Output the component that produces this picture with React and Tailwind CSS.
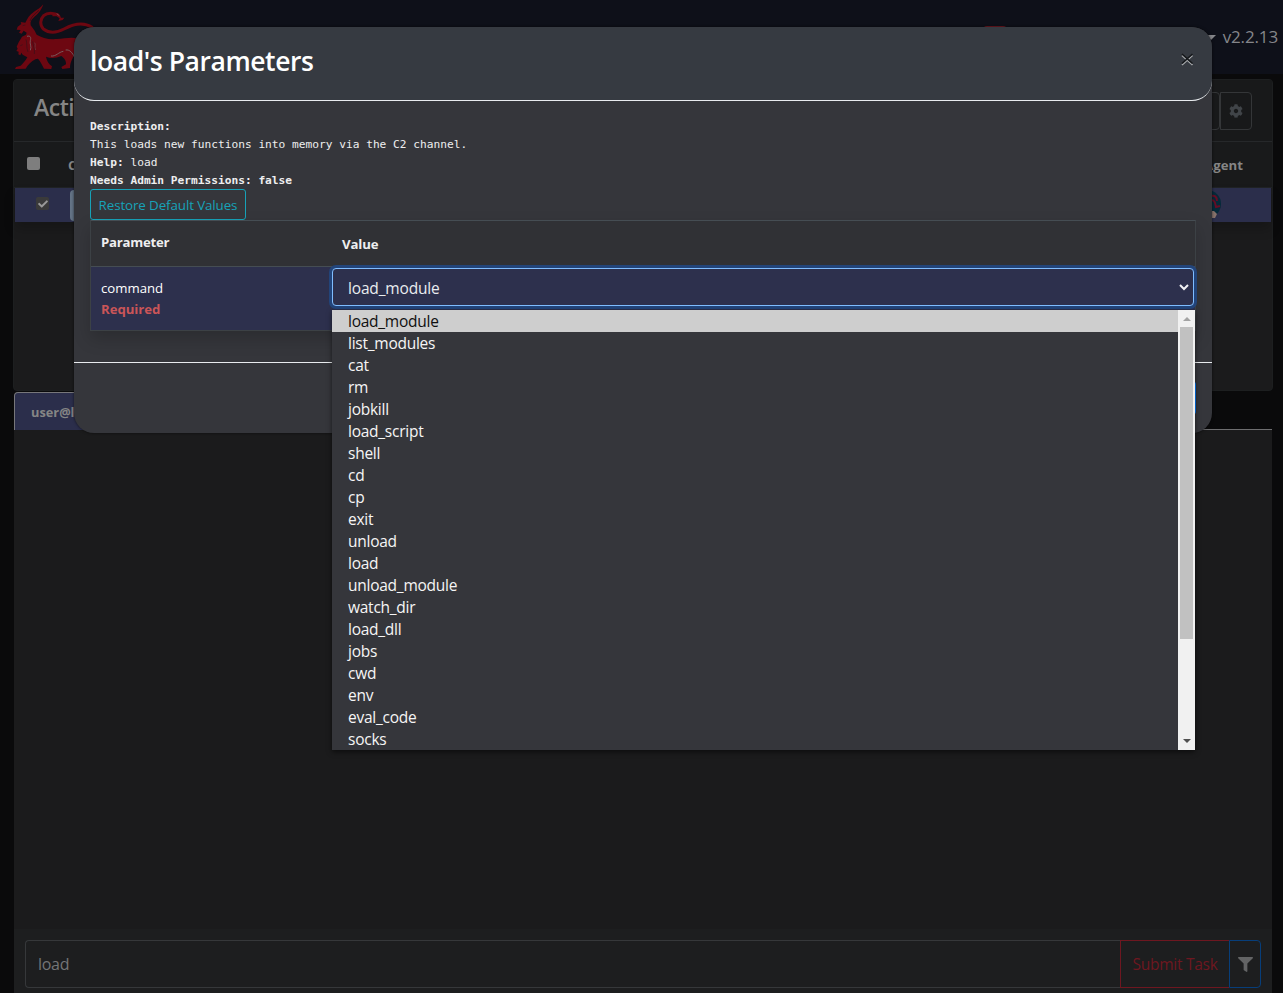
import { FaCog, FaFilter, FaCheck } from "react-icons/fa";

const COMMANDS = [
  "load_module", "list_modules", "cat", "rm", "jobkill", "load_script", "shell",
  "cd", "cp", "exit", "unload", "load", "unload_module", "watch_dir", "load_dll",
  "jobs", "cwd", "env", "eval_code", "socks",
];

function Logo() {
  return (
    <svg className="h-[74px] w-[100px]" viewBox="0 0 300 222" fill="none">
      <g fill="#6d0711">
        <path d="M130 13C123 34 112 43 102 52C94 59 90 65 92 76L104 92L110 104C126 113 144 119 170 117C196 114 218 110 240 116V182L222 166C217 178 210 188 210 204L187 207L184 201L198 193C199 182 192 174 184 168C168 175 152 176 138 170C140 182 146 192 156 199L154 207L132 206C126 195 122 184 114 176L106 178C94 184 84 194 77 206L45 207L48 201L62 197C70 190 76 182 82 172L68 164L64 158L61 166L55 163L56 155L49 153L53 146L50 140L56 127L66 110L78 104L80 98L71 92L65 101L57 98L62 90L50 89L53 80L64 72L62 66L76 68C82 55 88 44 102 35C112 29 122 23 130 13Z" />
        <path d="M158 40C166 36 176 38 180 46L183 53L193 53L188 60L175 63L179 55L170 49L157 49Z" />
      </g>
      <path d="M90 63C94 49 106 41 117 31" stroke="#0e1019" strokeWidth="1.5" />
      <path d="M172 44C157 38 141 38 131 47C120 58 119 75 130 87C147 100 171 98 192 87C215 75 246 62 276 82" stroke="#6d0711" strokeWidth="9" strokeLinecap="round" />
      <path d="M81 109C91 106 94 112 91 122C88 132 96 138 91 151" stroke="#786365" strokeWidth="2.6" />
      <path d="M104 128C109 134 102 140 107 150" stroke="#6b4a4e" strokeWidth="1.8" />
      <path d="M153 168C168 170 176 156 190 154M197 150C209 148 217 158 224 172" stroke="#786365" strokeWidth="2.8" />
      <path d="M170 41L178 47" stroke="#786365" strokeWidth="2" />
      <path d="M68 77L76 75M61 137L68 134M98 124C100 138 105 150 103 162M78 118C82 130 78 142 84 156" stroke="#35101a" strokeWidth="2" />
    </svg>
  );
}

function Page() {
  return (
    <div className="flex h-[993px] flex-col">
      <nav className="flex h-[74px] shrink-0 justify-between bg-[#0e1019]">
        <Logo />
        <div className="flex h-[74px] items-center pr-[5px] text-[#85868a]">
          <span className="mt-[8px] mr-[199px] h-[30px] w-6 rounded bg-[#6e1720]" />
          <span className="mr-[7px] border-x-[5px] border-t-[5px] border-x-transparent border-t-[#85868a]" />
          <span className="text-[17px] tracking-[-0.14px]">v2.2.13</span>
        </div>
      </nav>

      <section className="mt-[5px] mr-[10px] ml-[13px] flex h-[312px] shrink-0 flex-col rounded border border-[#1d1f20] bg-[#1b1b1c]">
        <div className="flex h-[62px] items-center justify-between border-b border-[#26282a] bg-[#18191a] pr-5 pl-5">
          <h2 className="mb-[6px] text-[23px] font-semibold tracking-[-0.5px] text-[#858585]">Acti</h2>
          <div className="flex h-[38px]">
            <span className="w-9 rounded-r border border-[#343638]" />
            <span className="flex w-8 items-center justify-center rounded-r border border-[#343638] text-[#404448]">
              <FaCog size={14} className="mt-px" />
            </span>
          </div>
        </div>
        <div className="flex h-[46px] items-center border-b border-[#202325] bg-[#191a1b] pr-[29px] pl-[13px] text-[13px] font-bold text-[#858585]">
          <span className="mb-[3px] h-[13px] w-[13px] rounded-[2px] bg-[#7e7e7e]" />
          <span className="mt-[2px] ml-[28px] grow">C</span>
          <span className="mt-[2px] text-[13.2px] tracking-[0.05px]"><span className="mr-[-2px] inline-block -translate-x-[2px]">A</span>gent</span>
        </div>
        <div className="mx-px flex h-[34px] items-center justify-between bg-[#2b2e4b] pr-[50px] pl-[21px] shadow-[0_7px_12px_rgba(0,0,0,0.2)]">
          <div className="flex items-center">
            <span className="mb-[3px] flex h-[13px] w-[13px] items-center justify-center rounded-[2px] bg-[#3a3a3a] text-[#999999]">
              <FaCheck size={10} />
            </span>
            <span className="ml-[21px] h-[31px] w-16 rounded bg-[#647486]" />
          </div>
          <svg className="mb-[3px] h-7 w-7" viewBox="0 0 28 28">
            <circle cx="14" cy="14" r="14" fill="#052a3a" />
            <path d="M18 6c4-1 6 1 6 5M18 10c4 0 4 3 5 7l4-1" fill="none" stroke="#650d25" strokeWidth="2" />
            <path d="M18 21h3l3 3-2 4h-4z" fill="#87736c" />
          </svg>
        </div>
      </section>

      <div className="mt-px mr-[11px] ml-[14px] flex h-[38px] shrink-0 border-b border-[#6e6e70]">
        <div className="h-[38px] w-40 rounded-t border border-b-0 border-[#77777b] bg-[#2b2e4b] pt-[10px] pl-4 text-[12.8px] leading-[19px] font-bold text-[#858585]">
          user@l
        </div>
      </div>

      <main className="mr-[11px] ml-[14px] flex grow flex-col justify-end bg-[#1b1b1c]">
        <div className="flex h-[64px] bg-[#1d1e1f] px-[11px] pt-[11px]">
          <div className="flex h-12 grow items-center rounded-l border border-r-0 border-[#36383a] pl-3 text-[16px] tracking-[-0.3px] text-[#747577]">load</div>
          <div className="flex h-12 w-[109px] items-center justify-center border border-r-0 border-[#6e1720] pt-[2px] text-[15.5px] tracking-[-0.26px] whitespace-nowrap text-[#6e1720]">
            Submit Task
          </div>
          <div className="flex h-12 w-8 items-center justify-center rounded-r border border-[#073e7a] text-[#636465]">
            <FaFilter size={15} />
          </div>
        </div>
      </main>
    </div>
  );
}

function OptionList() {
  return (
    <div className="absolute top-[310px] left-[332px] flex h-[440px] w-[863px] bg-[#35363b] shadow-[0_2px_5px_rgba(0,0,0,0.55)]">
      <ul className="grow text-[15.5px] leading-[22px] tracking-[-0.25px] text-[#f5f5f5]">
        {COMMANDS.map((name, i) => (
          <li key={name} className={i === 0 ? "h-[22px] bg-[#cecece] pl-4 text-[#101010]" : "h-[22px] pl-4"}>
            {name}
          </li>
        ))}
      </ul>
      <div className="flex w-[17px] flex-col items-center bg-[#f1f1f1]">
        <div className="flex h-[17px] items-center">
          <span className="mt-px border-x-[4px] border-b-[4px] border-x-transparent border-b-[#a3a3a3]" />
        </div>
        <div className="h-[312px] w-[13px] bg-[#c1c1c1]" />
        <div className="mt-auto flex h-[17px] items-center">
          <span className="mb-px border-x-[4px] border-t-[4px] border-x-transparent border-t-[#505050]" />
        </div>
      </div>
    </div>
  );
}

function Modal() {
  return (
    <div className="absolute top-[27px] left-[74px] flex h-[406px] w-[1138px] flex-col overflow-hidden rounded-[20px] bg-[#35363b] shadow-[0_0_3px_rgba(0,0,0,0.6)]">
      <header className="flex h-[74px] shrink-0 items-start justify-between rounded-[20px] border-b border-[#e9ecef] bg-[#363a41] pr-[18px] pl-4">
        <h1 className="mt-[13px] text-[26.5px] leading-[42px] font-semibold tracking-[-0.43px] text-white">load's Parameters</h1>
        <svg className="mt-[25px] h-[14px] w-[14px]" viewBox="0 0 14 14" fill="none">
          <path d="M2 3.5l10.5 9.5M12.5 3.5L2 13" stroke="#a6a8ab" strokeWidth="1.6" />
          <path d="M2 2l10.5 9.5M12.5 2L2 11.5" stroke="#15171a" strokeWidth="1.6" />
        </svg>
      </header>
      <div className="flex h-[261px] shrink-0 flex-col px-4 pt-[17px]">
        <div className="h-[71px] shrink-0 font-['DejaVu_Sans_Mono',monospace] text-[11.2px] leading-[18px] whitespace-pre text-[#eeeeef]">
          <p className="font-bold">Description:</p>
          <p>This loads new functions into memory via the C2 channel.</p>
          <p><b>Help:</b> load</p>
          <p className="font-bold">Needs Admin Permissions: false</p>
        </div>
        <button className="h-[31px] w-[156px] shrink-0 rounded-[3px] border border-[#17a2b8] pt-[2px] text-[13.4px] tracking-[-0.12px] whitespace-nowrap text-[#17a2b8]">
          Restore Default Values
        </button>
        <div className="flex h-[111px] w-[1106px] shrink-0 flex-col border border-[#3c4145] border-t-[#454d53] text-[13.2px] shadow-[0_8px_16px_rgba(0,0,0,0.18)]">
          <div className="flex h-[46px] shrink-0 border-b border-[#454d53] bg-[#303135] font-bold text-[#eeeeef]">
            <span className="w-[241px] pt-[12px] pl-[10px] tracking-[-0.25px]">Parameter</span>
            <span className="pt-[14px] pl-[10px] tracking-[-0.1px]">Value</span>
          </div>
          <div className="flex grow bg-[#2d304d]">
            <div className="w-[241px] pt-[11px] pl-[10px] leading-[21px]">
              <p className="text-white">command</p>
              <p className="font-bold tracking-[-0.05px] text-[#ca5558]">Required</p>
            </div>
            <div className="mt-px flex h-[38px] w-[862px] items-center justify-between rounded border border-[#80bdff] bg-[#2d304d] pr-[3px] pl-[15px] text-[15.5px] tracking-[-0.16px] text-[#e9ecef] shadow-[0_0_0_3px_#22447a]">
              <span className="mt-[3px]">load_module</span>
              <svg className="h-3 w-3" viewBox="0 0 12 12" fill="none">
                <path d="M2 4l4 4 4-4" stroke="#f1f1f4" strokeWidth="2" />
              </svg>
            </div>
          </div>
        </div>
      </div>
      <footer className="flex grow justify-end border-t border-[#e9ecef] pt-[18px] pr-4">
        <button className="h-[34px] w-20 rounded bg-[#007bff]" />
      </footer>
    </div>
  );
}

export default function App() {
  return (
    <div className="relative h-[993px] w-[1283px] overflow-hidden bg-[#0a0a0b] font-['Open_Sans','Noto_Sans',sans-serif]">
      <Page />
      <Modal />
      <OptionList />
    </div>
  );
}
